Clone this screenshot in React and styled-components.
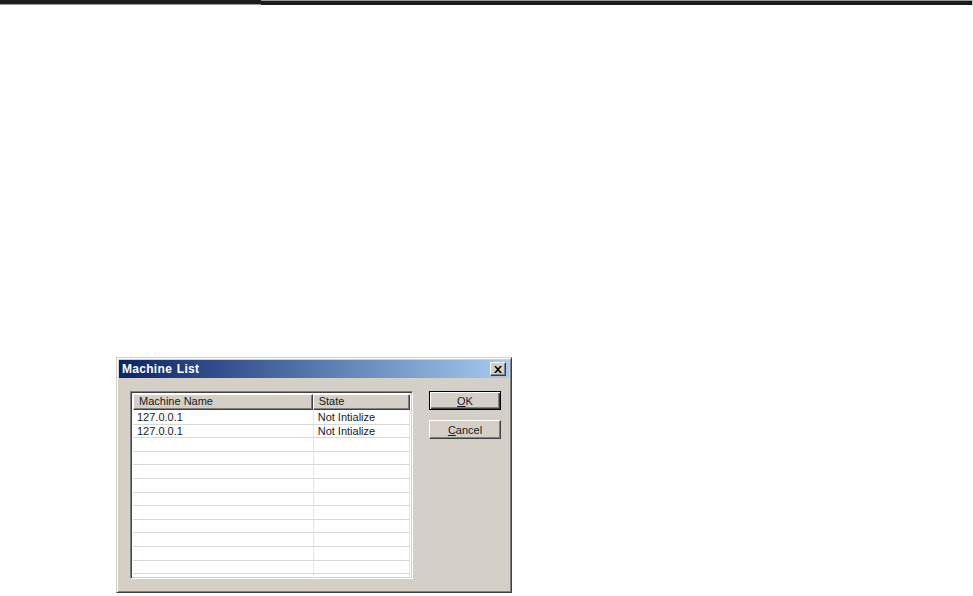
import React from "react";
import styled, { createGlobalStyle } from "styled-components";

const GlobalStyle = createGlobalStyle`
	html, body {
		margin: 0;
		padding: 0;
		background: #ffffff;
	}
	body {
		font-family: "Liberation Sans", Arial, sans-serif;
	}
`;

const rows = [
	{ name: "127.0.0.1", state: "Not Intialize" },
	{ name: "127.0.0.1", state: "Not Intialize" },
];

export default function App() {
	const blanks = Array.from({ length: 11 - rows.length + 2 });

	return (
		<>
			<GlobalStyle />
			<Page>
				<TopRule>
					<RuleSegment $flip={false} />
					<RuleSegment $flip={true} />
				</TopRule>

				<Dialog>
					<TitleBar>
						<Title>Machine List</Title>
						<CloseButton aria-label="close">
							<svg width="8" height="7" viewBox="0 0 8 7">
								<path
									d="M0 0h2l2 2.2L6 0h2L5 3.5 8 7H6L4 4.8 2 7H0l3-3.5z"
									fill="#000"
								/>
							</svg>
						</CloseButton>
					</TitleBar>

					<Body>
						<ListView>
							<HeaderRow>
								<HeaderCell $width={181}>Machine Name</HeaderCell>
								<HeaderCell $width={98}>State</HeaderCell>
							</HeaderRow>
							<Rows>
								{rows.map((r, i) => (
									<Row key={i}>
										<Cell $width={182}>{r.name}</Cell>
										<Cell $width={97}>{r.state}</Cell>
									</Row>
								))}
								{blanks.map((_, i) => (
									<Row key={"b" + i}>
										<Cell $width={182} />
										<Cell $width={97} />
									</Row>
								))}
							</Rows>
						</ListView>

						<Buttons>
							<Button $default>
								<u>O</u>K
							</Button>
							<Button>
								<u>C</u>ancel
							</Button>
						</Buttons>
					</Body>
				</Dialog>
			</Page>
		</>
	);
}

const Page = styled.div`
	width: 973px;
	height: 596px;
	background: #ffffff;
	overflow: hidden;
`;

const TopRule = styled.div`
	display: flex;
	height: 5px;
	width: 972px;
	border-right: 1px solid #c8c8c8;
`;

const RuleSegment = styled.div`
	height: 5px;
	background: #1c1c1c;
	flex: ${(p) => (p.$flip ? "1" : "0 0 261px")};
	border-${(p) => (p.$flip ? "top" : "bottom")}: 1px solid #9a9a9a;
	box-sizing: border-box;
`;

const Dialog = styled.div`
	margin: 352px 0 0 116px;
	width: 396px;
	height: 236px;
	box-sizing: border-box;
	background: #d4d0c8;
	border-top: 1px solid #d4d0c8;
	border-left: 1px solid #d4d0c8;
	border-right: 1px solid #404040;
	border-bottom: 1px solid #404040;
	box-shadow: inset 1px 1px 0 #ffffff, inset -1px -1px 0 #808080;
	padding: 2px;
	display: flex;
	flex-direction: column;
`;

const TitleBar = styled.div`
	height: 18px;
	display: flex;
	align-items: center;
	justify-content: space-between;
	padding: 0 3px 0 3px;
	background: linear-gradient(to right, #0a246a, #a6caf0);
`;

const Title = styled.span`
	color: #ffffff;
	font-weight: bold;
	font-size: 12px;
	letter-spacing: 0.3px;
	word-spacing: 1px;
`;

const CloseButton = styled.div`
	width: 16px;
	height: 14px;
	box-sizing: border-box;
	background: #d4d0c8;
	border-top: 1px solid #ffffff;
	border-left: 1px solid #ffffff;
	border-right: 1px solid #404040;
	border-bottom: 1px solid #404040;
	box-shadow: inset -1px -1px 0 #808080;
	display: flex;
	align-items: center;
	justify-content: center;
`;

const Body = styled.div`
	display: flex;
	padding: 13px 0 0 11px;
	gap: 16px;
`;

const ListView = styled.div`
	width: 283px;
	height: 188px;
	box-sizing: border-box;
	background: #ffffff;
	border-top: 1px solid #808080;
	border-left: 1px solid #808080;
	border-right: 1px solid #ffffff;
	border-bottom: 1px solid #ffffff;
	box-shadow: inset 1px 1px 0 #404040, inset -1px -1px 0 #d4d0c8;
	padding: 2px;
	overflow: hidden;
	display: flex;
	flex-direction: column;
`;

const HeaderRow = styled.div`
	display: flex;
	height: 16px;
	flex: 0 0 16px;
`;

const HeaderCell = styled.div`
	width: ${(p) => p.$width}px;
	box-sizing: border-box;
	background: #d4d0c8;
	border-top: 1px solid #ffffff;
	border-left: 1px solid #ffffff;
	border-right: 1px solid #404040;
	border-bottom: 1px solid #404040;
	box-shadow: inset -1px -1px 0 #808080;
	font-size: 11px;
	line-height: 13px;
	padding-left: 5px;
	color: #1a1a1a;
`;

const Rows = styled.div`
	display: flex;
	flex-direction: column;
	padding-top: 1px;
`;

const Row = styled.div`
	display: flex;
	height: 13.6px;
	flex: 0 0 13.6px;
	box-sizing: border-box;
	border-bottom: 1px solid #d8d8d8;
`;

const Cell = styled.div`
	width: ${(p) => p.$width}px;
	box-sizing: border-box;
	border-right: 1px solid #e4e4e4;
	font-size: 11px;
	line-height: 12px;
	padding-left: 4px;
	color: #1a1a1a;
	white-space: nowrap;
`;

const Buttons = styled.div`
	display: flex;
	flex-direction: column;
	gap: 10px;
`;

const Button = styled.div`
	width: 72px;
	height: 19px;
	box-sizing: border-box;
	background: #d4d0c8;
	font-size: 11px;
	color: #1a1a1a;
	display: flex;
	align-items: center;
	justify-content: center;
	border: 1px solid #000000;
	box-shadow: inset 1px 1px 0 #ffffff, inset -1px -1px 0 #404040,
		inset -2px -2px 0 #808080;
	${(p) =>
		!p.$default &&
		`
		border-color: #ffffff #404040 #404040 #ffffff;
		box-shadow: inset -1px -1px 0 #808080;
	`}
	u {
		text-decoration: underline;
	}
`;
